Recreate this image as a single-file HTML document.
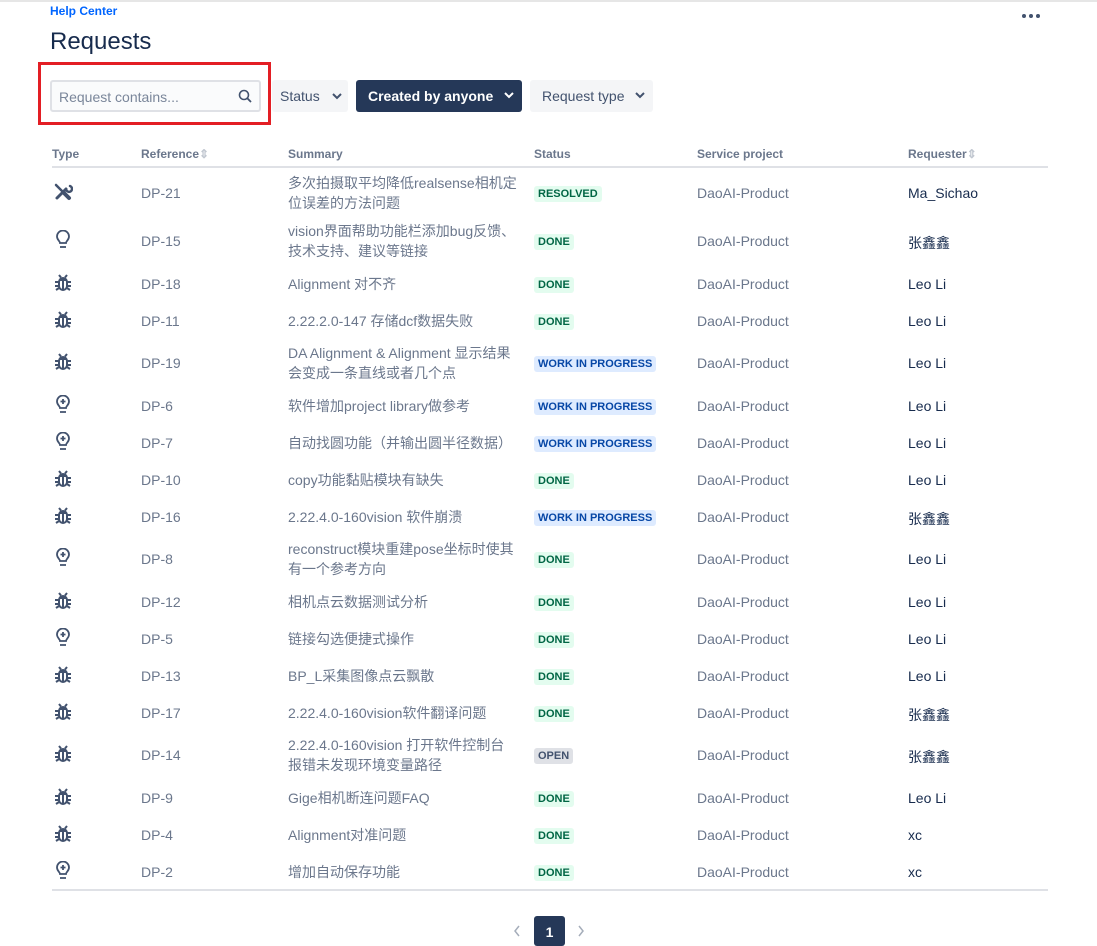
<!DOCTYPE html>
<html><head><meta charset="utf-8"><style>
*{margin:0;padding:0;box-sizing:border-box}
body{width:1097px;height:941px;background:#fff;position:relative;overflow:hidden;font-family:"Liberation Sans","Noto Sans CJK SC",sans-serif;color:#172b4d}
.a{position:absolute}
.topline{left:0;top:0;width:1097px;height:2px;background:#e6e6e6}
.hc{left:50px;top:4px;font-size:12px;font-weight:bold;color:#0065ff}
.h1{left:50px;top:28px;font-size:24px;color:#172b4d}
.dots{left:1022px;top:14px;display:flex;gap:3px}
.dots i{display:block;width:4px;height:4px;border-radius:50%;background:#42526e}
.red{left:38px;top:62px;width:233px;height:63px;border:3px solid #e31e24}
.search{left:50px;top:80px;width:211px;height:32px;border:2px solid #dfe1e6;background:#fafbfc;border-radius:3px;font-size:14px;color:#7a869a;padding:7px 0 0 7px}
.btn{top:80px;height:32px;border-radius:3px;font-size:14px;padding-top:8px;padding-left:10px}
.g{background:#f4f5f7;color:#42526e}
.th{top:147px;font-size:12px;font-weight:bold;color:#6b778c}
.hl{left:52px;top:166px;width:996px;height:2px;background:#dfe1e6}
.bl{left:52px;top:889px;width:996px;height:2px;background:#dfe1e6}
.t{font-size:14px;color:#6b778c;line-height:20px}
.r{font-size:14px;color:#172b4d}
.lz{font-size:11px;font-weight:bold;padding:2px 4px;border-radius:3px;line-height:12px}
.done{background:#e3fcef;color:#006644}
.wip{background:#deebff;color:#0747a6}
.open{background:#dfe1e6;color:#42526e}
</style></head><body>
<div class="a topline"></div>
<div class="a hc">Help Center</div>
<div class="a h1">Requests</div>
<div class="a dots"><i></i><i></i><i></i></div>
<div class="a red"></div>
<div class="a search">Request contains...
<svg class="a" style="left:186px;top:7px" width="14" height="14" viewBox="0 0 14 14"><circle cx="6" cy="6" r="4.5" fill="none" stroke="#42526e" stroke-width="1.6"/><path d="M9.3 9.3L13 13" stroke="#42526e" stroke-width="1.8"/></svg></div>
<div class="a btn g" style="left:272px;width:76px;padding-left:8px">Status<svg class="a" style="left:60px;top:13px" width="10" height="8"><path d="M1 1l4 4 4-4" stroke="#42526e" stroke-width="2" fill="none"/></svg></div>
<div class="a btn" style="left:356px;width:166px;background:#253858;color:#fff;font-weight:bold;padding-left:12px">Created by anyone<svg class="a" style="left:148px;top:12px" width="10" height="8"><path d="M1 1l4 4 4-4" stroke="#fff" stroke-width="2" fill="none"/></svg></div>
<div class="a btn g" style="left:530px;width:123px;padding-left:12px">Request type<svg class="a" style="left:105px;top:12px" width="10" height="8"><path d="M1 1l4 4 4-4" stroke="#42526e" stroke-width="2" fill="none"/></svg></div>
<div class="a th" style="left:52px">Type</div>
<div class="a th" style="left:141px">Reference<span style="color:#c1c7d0">&#8661;</span></div>
<div class="a th" style="left:288px">Summary</div>
<div class="a th" style="left:534px">Status</div>
<div class="a th" style="left:697px">Service project</div>
<div class="a th" style="left:908px">Requester<span style="color:#c1c7d0">&#8661;</span></div>
<div class="a hl"></div>
<div id="rows"></div>
<div class="a bl"></div>
<svg class="a" style="left:513px;top:925px" width="8" height="12"><path d="M6 1L2 6l4 5" stroke="#a5adba" stroke-width="1.5" fill="none"/></svg>
<div class="a" style="left:534px;top:916px;width:31px;height:30px;background:#253858;border-radius:3px;color:#fff;font-weight:bold;font-size:14px;text-align:center;padding-top:8px">1</div>
<svg class="a" style="left:577px;top:925px" width="8" height="12"><path d="M2 1l4 5-4 5" stroke="#a5adba" stroke-width="1.5" fill="none"/></svg>
<svg width="0" height="0" style="position:absolute"><defs>
<symbol id="bug" viewBox="0 0 20 20"><g fill="none" stroke="#42526e" stroke-width="2"><path d="M6 2l2 2.5M14 2l-2 2.5"/><rect x="6" y="5" width="8" height="12" rx="4"/><path d="M10 8v9M2 9h4M14 9h4M2 13h4M14 13h4M3 17l3-2M17 17l-3-2M6.5 7h7"/></g></symbol>
<symbol id="bulb" viewBox="0 0 20 20"><g fill="none" stroke="#42526e" stroke-width="1.8"><path d="M7 13c0-2-3-3-3-6.5a6 6 0 0112 0c0 3.5-3 4.5-3 6.5z"/><path d="M7 17h6"/></g></symbol>
<symbol id="bulbp" viewBox="0 0 20 20"><g fill="none" stroke="#42526e" stroke-width="1.8"><path d="M7 13c0-2-3-3-3-6.5a6 6 0 0112 0c0 3.5-3 4.5-3 6.5z"/><path d="M7 17h6M10 4v5M7.5 6.5h5"/></g></symbol>
<symbol id="tool" viewBox="0 0 20 20"><g fill="none" stroke="#42526e" stroke-linecap="round"><path d="M3 3l6 6" stroke-width="2.5"/><path d="M11 11l5 5" stroke-width="4"/><path d="M4 16l9-9" stroke-width="3"/><path d="M13 7a3 3 0 104-3" stroke-width="2.5"/></g></symbol>
</defs></svg>
<script>
var d=[["tool","DP-21","多次拍摄取平均降低realsense相机定<br>位误差的方法问题","RESOLVED","done","Ma_Sichao",193],
["bulb","DP-15","vision界面帮助功能栏添加bug反馈、<br>技术支持、建议等链接","DONE","done","张鑫鑫",241],
["bug","DP-18","Alignment 对不齐","DONE","done","Leo Li",284],
["bug","DP-11","2.22.2.0-147 存储dcf数据失败","DONE","done","Leo Li",321],
["bug","DP-19","DA Alignment &amp; Alignment 显示结果<br>会变成一条直线或者几个点","WORK IN PROGRESS","wip","Leo Li",363],
["bulbp","DP-6","软件增加project library做参考","WORK IN PROGRESS","wip","Leo Li",406],
["bulbp","DP-7","自动找圆功能（并输出圆半径数据）","WORK IN PROGRESS","wip","Leo Li",443],
["bug","DP-10","copy功能黏贴模块有缺失","DONE","done","Leo Li",480],
["bug","DP-16","2.22.4.0-160vision 软件崩溃","WORK IN PROGRESS","wip","张鑫鑫",517],
["bulbp","DP-8","reconstruct模块重建pose坐标时使其<br>有一个参考方向","DONE","done","Leo Li",559],
["bug","DP-12","相机点云数据测试分析","DONE","done","Leo Li",602],
["bulbp","DP-5","链接勾选便捷式操作","DONE","done","Leo Li",639],
["bug","DP-13","BP_L采集图像点云飘散","DONE","done","Leo Li",676],
["bug","DP-17","2.22.4.0-160vision软件翻译问题","DONE","done","张鑫鑫",713],
["bug","DP-14","2.22.4.0-160vision 打开软件控制台<br>报错未发现环境变量路径","OPEN","open","张鑫鑫",755],
["bug","DP-9","Gige相机断连问题FAQ","DONE","done","Leo Li",798],
["bug","DP-4","Alignment对准问题","DONE","done","xc",835],
["bulbp","DP-2","增加自动保存功能","DONE","done","xc",872]];
var h="";d.forEach(function(r){var y=r[6];var two=r[2].indexOf("<br>")>0;
h+='<svg class="a" style="left:53px;top:'+(y-11)+'px" width="20" height="20"><use href="#'+r[0]+'"/></svg>';
h+='<div class="a t" style="left:141px;top:'+(y-10)+'px">'+r[1]+'</div>';
h+='<div class="a t" style="left:288px;top:'+(y-(two?20:10))+'px">'+r[2]+'</div>';
h+='<div class="a lz '+r[4]+'" style="left:534px;top:'+(y-7)+'px">'+r[3]+'</div>';
h+='<div class="a t" style="left:697px;top:'+(y-10)+'px">DaoAI-Product</div>';
h+='<div class="a r" style="left:908px;top:'+(y-8)+'px">'+r[5]+'</div>';});
document.getElementById("rows").innerHTML=h;
</script>
</body></html>
